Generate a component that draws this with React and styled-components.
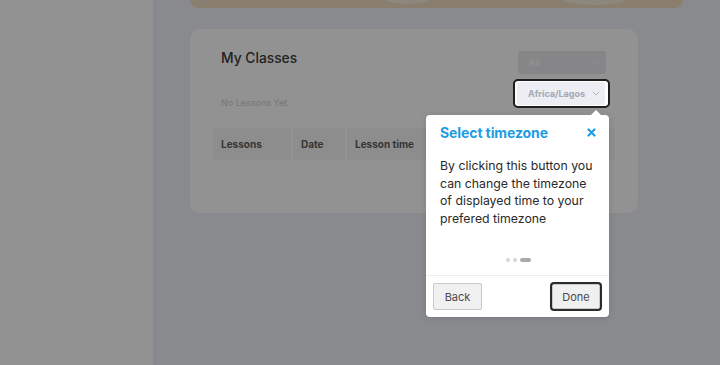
import React from "react";
import styled, { createGlobalStyle } from "styled-components";

const Global = createGlobalStyle`
  html, body { margin: 0; padding: 0; }
  body {
    font-family: Inter, "Open Sans", "Liberation Sans", sans-serif;
    background: #eff1f8;
    overflow: hidden;
  }
  * { box-sizing: border-box; }
`;

const Page = styled.div`
  display: flex;
  width: 720px;
  height: 365px;
  background: #eff1f8;
`;

const Sidebar = styled.aside`
  width: 153px;
  flex: none;
  background: #ffffff;
`;

const Main = styled.main`
  flex: 1;
  padding: 0 37px;
  display: flex;
  flex-direction: column;
`;

const Banner = styled.div`
  height: 8px;
  border-radius: 0 0 9px 9px;
  background:
    radial-gradient(ellipse 30px 11px at 217px -7px, rgba(255,255,255,0.45) 96%, transparent 100%),
    radial-gradient(ellipse 40px 11px at 405px -6px, rgba(255,255,255,0.45) 96%, transparent 100%),
    #f1dec2;
`;

const Card = styled.section`
  margin-top: 21px;
  width: 448px;
  background: #ffffff;
  border-radius: 10px;
  padding: 22px 23px 53px;
`;

const HeaderRow = styled.div`
  display: flex;
  justify-content: space-between;
  align-items: flex-start;
  padding: 0 5px 0 8px;
`;

const LeftCol = styled.div`
  display: flex;
  flex-direction: column;
`;

const Title = styled.h2`
  margin: 0;
  font-size: 13.8px;
  line-height: 14px;
  font-weight: 500;
  color: #3c3c3c;
`;

const Empty = styled.div`
  margin-top: 32px;
  font-size: 9px;
  line-height: 12px;
  color: #d0d0d0;
`;

const RightCol = styled.div`
  display: flex;
  flex-direction: column;
  align-items: center;
  gap: 5px;
`;

const Select = styled.div`
  width: 88px;
  height: 23px;
  border-radius: 3px;
  display: flex;
  align-items: center;
  justify-content: space-between;
  padding: 0 5px 0 11px;
  font-size: 9px;
  font-weight: ${(p) => (p.$bold ? 700 : 500)};
  color: ${(p) => p.$color};
  background: ${(p) => p.$bg};
`;

const Spotlight = styled.div`
  position: relative;
  z-index: 10;
  border: 2px solid #1e1e1e;
  border-radius: 5px;
  padding: 1px 3px 1px 2px;
  background: #ffffff;
  box-shadow: 0 0 0 2000px rgba(0, 0, 0, 0.427);
`;

const Chevron = ({ color }) => (
  <svg width="8" height="5" viewBox="0 0 8 5" fill="none">
    <path d="M1 1l3 3 3-3" stroke={color} strokeWidth="1" strokeLinecap="round" strokeLinejoin="round" />
  </svg>
);

const TableHead = styled.div`
  margin-top: 19px;
  display: grid;
  grid-template-columns: 78px 52px 1fr;
  gap: 2px;
  height: 32px;
`;

const HeadCell = styled.div`
  background: #f6f6f6;
  display: flex;
  align-items: center;
  padding-left: 8px;
  font-size: 10px;
  font-weight: 700;
  color: #5e5e5e;
  white-space: nowrap;
`;

const Tooltip = styled.div`
  position: absolute;
  top: calc(100% + 9px);
  right: -1px;
  width: 183px;
  background: #ffffff;
  border-radius: 4px;
  box-shadow: 0 1px 6px rgba(0, 0, 0, 0.12);
  &::before {
    content: "";
    position: absolute;
    top: -5px;
    right: 8px;
    border-left: 5px solid transparent;
    border-right: 5px solid transparent;
    border-bottom: 5px solid #ffffff;
  }
`;

const TipBody = styled.div`
  padding: 8px 12px 0 14px;
`;

const TipHeader = styled.div`
  display: flex;
  justify-content: space-between;
  align-items: center;
  height: 18px;
`;

const TipTitle = styled.h3`
  margin: 0;
  font-size: 14px;
  font-weight: 700;
  color: #1d9be2;
  letter-spacing: -0.1px;
`;

const Close = styled.button`
  border: none;
  background: none;
  padding: 0;
  width: 12px;
  height: 12px;
  display: flex;
  align-items: center;
  justify-content: center;
  cursor: pointer;
`;

const TipText = styled.p`
  margin: 16px 0 0;
  font-size: 12.3px;
  line-height: 17.5px;
  color: #2a2a2a;
`;

const Dots = styled.div`
  margin-top: 31px;
  display: flex;
  justify-content: center;
  align-items: center;
  gap: 3px;
  height: 4px;
`;

const Dot = styled.span`
  width: ${(p) => (p.$active ? "11px" : "4px")};
  height: 4px;
  border-radius: 2px;
  background: ${(p) => (p.$active ? "#a9a9a9" : "#d6d6d6")};
`;

const TipFooter = styled.div`
  margin-top: 13px;
  border-top: 1px solid #ececec;
  padding: 7px 9px 7px 7px;
  display: flex;
  justify-content: space-between;
  align-items: center;
`;

const Btn = styled.button`
  width: ${(p) => (p.$focus ? "48px" : "49px")};
  height: ${(p) => (p.$focus ? "25px" : "27px")};
  border: 1px solid #c9c9c9;
  border-radius: 2px;
  background: #f0f0f0;
  font-family: inherit;
  font-size: 11px;
  color: #4a4a4a;
  padding: 0;
  box-shadow: ${(p) => (p.$focus ? "0 0 0 2px #2b2b2b" : "none")};
`;

export default function App() {
  return (
    <>
      <Global />
      <Page>
        <Sidebar />
        <Main>
          <Banner />
          <Card>
            <HeaderRow>
              <LeftCol>
                <Title>My Classes</Title>
                <Empty>No Lessons Yet</Empty>
              </LeftCol>
              <RightCol>
                <Select $bg="#eaebf0" $color="#ffffff">
                  All
                  <Chevron color="#ffffff" />
                </Select>
                <Spotlight>
                  <Select $bg="#eceef3" $color="#a3a7b6" $bold>
                    Africa/Lagos
                    <Chevron color="#b3b6c2" />
                  </Select>
                  <Tooltip>
                    <TipBody>
                      <TipHeader>
                        <TipTitle>Select timezone</TipTitle>
                        <Close aria-label="Close">
                          <svg width="9" height="9" viewBox="0 0 9 9">
                            <path d="M1.5 1.5l6 6M7.5 1.5l-6 6" stroke="#1d9be2" strokeWidth="2.2" strokeLinecap="round" />
                          </svg>
                        </Close>
                      </TipHeader>
                      <TipText>
                        By clicking this button you can change the timezone of displayed time to your prefered timezone
                      </TipText>
                      <Dots>
                        <Dot />
                        <Dot />
                        <Dot $active />
                      </Dots>
                    </TipBody>
                    <TipFooter>
                      <Btn>Back</Btn>
                      <Btn $focus>Done</Btn>
                    </TipFooter>
                  </Tooltip>
                </Spotlight>
              </RightCol>
            </HeaderRow>
            <TableHead>
              <HeadCell>Lessons</HeadCell>
              <HeadCell>Date</HeadCell>
              <HeadCell>Lesson time</HeadCell>
            </TableHead>
          </Card>
        </Main>
      </Page>
    </>
  );
}
